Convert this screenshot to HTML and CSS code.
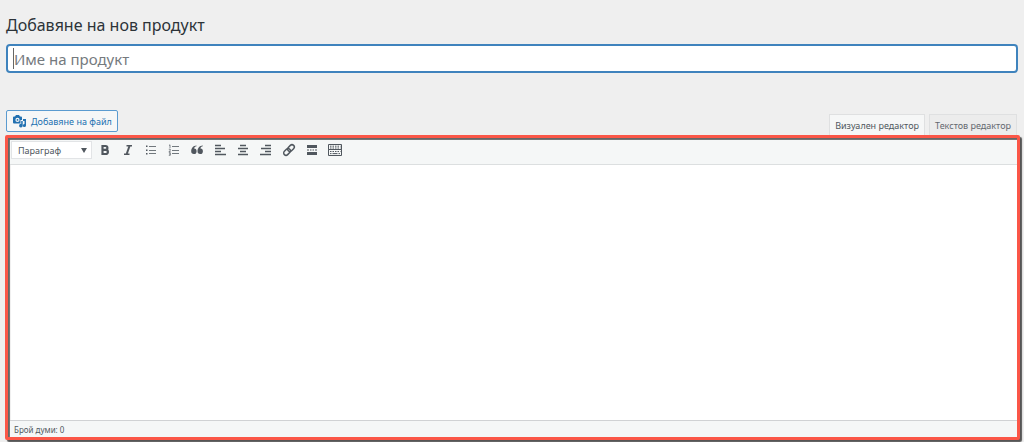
FILE: index.html
```
<!DOCTYPE html>
<html lang="bg">
<head>
    <meta charset="UTF-8">
    <title>Добавяне на нов продукт</title>
    <link rel="stylesheet" href="styles.css">
</head>
<body>
<main class="wrap">
    <h1>Добавяне на нов продукт</h1>

    <div class="title-box">
        <input type="text" id="title" class="title-input" placeholder="Име на продукт" aria-label="Име на продукт">
    </div>

    <div class="editor-tools">
        <button type="button" class="media-btn">
            <svg width="14" height="14" viewBox="0 0 14 14" aria-hidden="true">
                <path fill="currentColor" fill-rule="evenodd" d="M1 2.500h1l1-1.500h3l1 1.500h1q1 0 1 1V6H7.500v3.500H1q-1 0-1-1v-5q0-1 1-1zM4.500 3.800a2.100 2.100 0 1 0 0 4.200a2.100 2.100 0 0 0 0-4.200z"/>
                <circle cx="4.500" cy="5.900" r=".9" fill="currentColor"/>
                <path fill="currentColor" d="M10 5h3v6.500a1.600 1.600 0 1 1-1.500-1.600V7H10z"/>
                <path fill="currentColor" d="M8.200 7h1.500v4.700a1.800 1.800 0 1 1-1.500-1.800z"/>
            </svg>
            Добавяне на файл
        </button>
        <div class="tabs">
            <button type="button" class="tab active">Визуален редактор</button>
            <button type="button" class="tab">Текстов редактор</button>
        </div>
    </div>

    <section class="editor">
        <div class="toolbar">
            <div class="format">
                <select aria-label="Формат">
                    <option>Параграф</option>
                </select>
            </div>
            <button type="button" class="tool" aria-label="Получер">
                <svg viewBox="0 0 14 14"><path fill="none" stroke="currentColor" stroke-width="2.200" d="M4.500 3h3a1.900 1.900 0 0 1 0 3.800h-3zM4.500 6.800h3.300a2.100 2.100 0 0 1 0 4.200H4.500z"/></svg>
            </button>
            <button type="button" class="tool" aria-label="Курсив">
                <svg viewBox="0 0 14 14"><path fill="none" stroke="currentColor" stroke-width="1.600" d="M5.500 2.800h5.500M3 11.200h5.500"/><path stroke="currentColor" stroke-width="2" d="M8.500 3L5.700 11"/></svg>
            </button>
            <button type="button" class="tool" aria-label="Списък с водещи символи">
                <svg viewBox="0 0 14 14"><path stroke="currentColor" stroke-opacity=".8" d="M5 3.500h7M5 7.500h7M5 10.500h7"/><path fill="currentColor" d="M2 2.500h1.500v1.500H2zM2 6.500h1.500v1.500H2zM2 10h1.500v1.500H2z"/></svg>
            </button>
            <button type="button" class="tool" aria-label="Номериран списък">
                <svg viewBox="0 0 14 14"><path stroke="currentColor" stroke-opacity=".8" d="M5 3.500h7M5 7.500h7M5 10.500h7"/><path fill="none" stroke="currentColor" stroke-width=".7" d="M2 2.500l1-.7V5M1.800 6.200h1.500v1L2 8.600h1.600M1.800 9.700h1.500v2.600H1.800M2 11h1.300"/></svg>
            </button>
            <button type="button" class="tool" aria-label="Цитат">
                <svg viewBox="0 0 14 14"><path fill="currentColor" d="M6.500 3.300V2.400C3.200 2.600 1.200 5 1.200 8.300a2.700 2.700 0 1 0 2.900-2.700C4.300 4.400 5 3.600 6.500 3.300zM12.800 3.300V2.400C9.500 2.600 7.500 5 7.500 8.300a2.700 2.700 0 1 0 2.900-2.700c.2-1.200.9-2 2.400-2.300z"/></svg>
            </button>
            <button type="button" class="tool" aria-label="Подравняване вляво">
                <svg viewBox="0 0 14 14"><path stroke="currentColor" stroke-width="1.500" d="M2 2.500h6M2 5.500h10M2 8.500h6M2 11.500h11"/></svg>
            </button>
            <button type="button" class="tool" aria-label="Центриране">
                <svg viewBox="0 0 14 14"><path stroke="currentColor" stroke-width="1.500" d="M4 2.500h6M2 5.500h10M4 8.500h6M2 11.500h10"/></svg>
            </button>
            <button type="button" class="tool" aria-label="Подравняване вдясно">
                <svg viewBox="0 0 14 14"><path stroke="currentColor" stroke-width="1.500" d="M6 2.500h6M2 5.500h10M6 8.500h6M1 11.500h11"/></svg>
            </button>
            <button type="button" class="tool" aria-label="Връзка">
                <svg viewBox="0 0 14 14"><g fill="none" stroke="currentColor" stroke-width="1.500" transform="rotate(-45 7 7)"><rect x="0.500" y="4.700" width="7.500" height="4.600" rx="2.300"/><rect x="6" y="4.700" width="7.500" height="4.600" rx="2.300"/></g></svg>
            </button>
            <button type="button" class="tool" aria-label="Етикет за още">
                <svg viewBox="0 0 14 14"><path fill="currentColor" d="M2 2h10v3H2zM2 9h10v3H2zM2 6.500h2v1H2zM5 6.500h1.500v1H5zM7.500 6.500H9v1H7.500zM10 6.500h2v1h-2z"/></svg>
            </button>
            <button type="button" class="tool" aria-label="Покажи лентата">
                <svg viewBox="0 0 14 14"><path fill="none" stroke="currentColor" d="M.5 1.500h13v5H.5zM.5 6.500h13v6H.5z"/><path stroke="currentColor" stroke-dasharray="1.500 1" d="M2 3.200h10.500M2 5h10.500M2 8.500h10.500"/><path stroke="currentColor" d="M2 10.600h1.500M4.500 10.600h5M10.500 10.600H12"/></svg>
            </button>
        </div>
        <div class="content" contenteditable="true" role="textbox" aria-label="Описание на продукта"></div>
        <div class="status">Брой думи: 0</div>
    </section>
</main>
</body>
</html>
```
FILE: styles.css
```
* {
    box-sizing: border-box;
}

body {
    margin: 0;
    background: #efefef;
    color: #2c3338;
    font-family: "Noto Sans", "Open Sans", sans-serif;
    font-size: 9px;
}

button,
input,
select {
    font-family: inherit;
    margin: 0;
}

.wrap {
    display: flex;
    flex-direction: column;
    min-height: 100vh;
    padding: 14px 4px 2px 5px;
}

h1 {
    margin: 0 0 8px 1px;
    font-size: 16px;
    font-weight: 400;
    line-height: 22px;
}

.title-box {
    position: relative;
    margin: 0 2px 37px 1px;
}

/* text cursor */
.title-box::before {
    content: "";
    position: absolute;
    left: 7px;
    top: 4px;
    width: 1px;
    height: 21px;
    background: #666;
}

.title-input {
    display: block;
    width: 100%;
    height: 29px;
    padding: 3px 6px 2px;
    border: 2px solid #3f83bd;
    border-radius: 4px;
    background: #fff;
    font-size: 15px;
    outline: none;
}

.title-input::placeholder {
    color: #757a7e;
}

.editor-tools {
    display: flex;
    justify-content: space-between;
    align-items: flex-start;
    padding: 0 3px 0 1px;
}

.media-btn {
    display: flex;
    align-items: center;
    gap: 4px;
    height: 22px;
    padding: 0 5px 0 6px;
    border: 1px solid #5b9bd0;
    border-radius: 2px;
    background: #f6f7f7;
    color: #2271b1;
    font-size: 9px;
}

.tabs {
    display: flex;
    gap: 4px;
    padding-top: 4px;
}

.tab {
    height: 21px;
    padding: 0 5px;
    border: 1px solid #dfe0e1;
    border-bottom: 0;
    background: #ececec;
    color: #646970;
    font-size: 9px;
}

.tab.active {
    background: #f6f7f7;
    color: #50575e;
}

.editor {
    display: flex;
    flex: 1;
    flex-direction: column;
    border: 3px solid #fb5647;
    border-radius: 2px;
    background: #fff;
    box-shadow: 2px 2px 1px #555, inset 2px 2px 1px #666;
}

.toolbar {
    display: flex;
    align-items: center;
    margin: 2px 0 0 2px;
    padding: 0 1px 4px;
    border-bottom: 1px solid #dcdfe0;
    background: #f5f7f7;
}

.format {
    position: relative;
    margin-right: 1px;
}

.format::after {
    content: "";
    position: absolute;
    right: 5px;
    top: 7px;
    border: 3px solid transparent;
    border-top: 5px solid #50575e;
    border-bottom: 0;
    pointer-events: none;
}

.format select {
    display: block;
    appearance: none;
    width: 81px;
    height: 18px;
    padding: 0 6px;
    border: 1px solid #e2e4e6;
    border-radius: 0;
    background: #fff;
    color: #50575e;
    font-size: 9px;
}

.tool {
    display: flex;
    align-items: center;
    justify-content: center;
    width: 23px;
    height: 20px;
    padding: 0;
    border: 0;
    background: none;
    color: #50575e;
}

.tool svg {
    width: 14px;
    height: 14px;
}

.content {
    flex: 1;
    margin-left: 2px;
    outline: none;
}

.status {
    margin-left: 2px;
    padding: 2px 4px 1px;
    border-top: 1px solid #d0d2d4;
    background: #f5f7f7;
    color: #50575e;
    font-size: 8px;
    line-height: 13px;
}
```
